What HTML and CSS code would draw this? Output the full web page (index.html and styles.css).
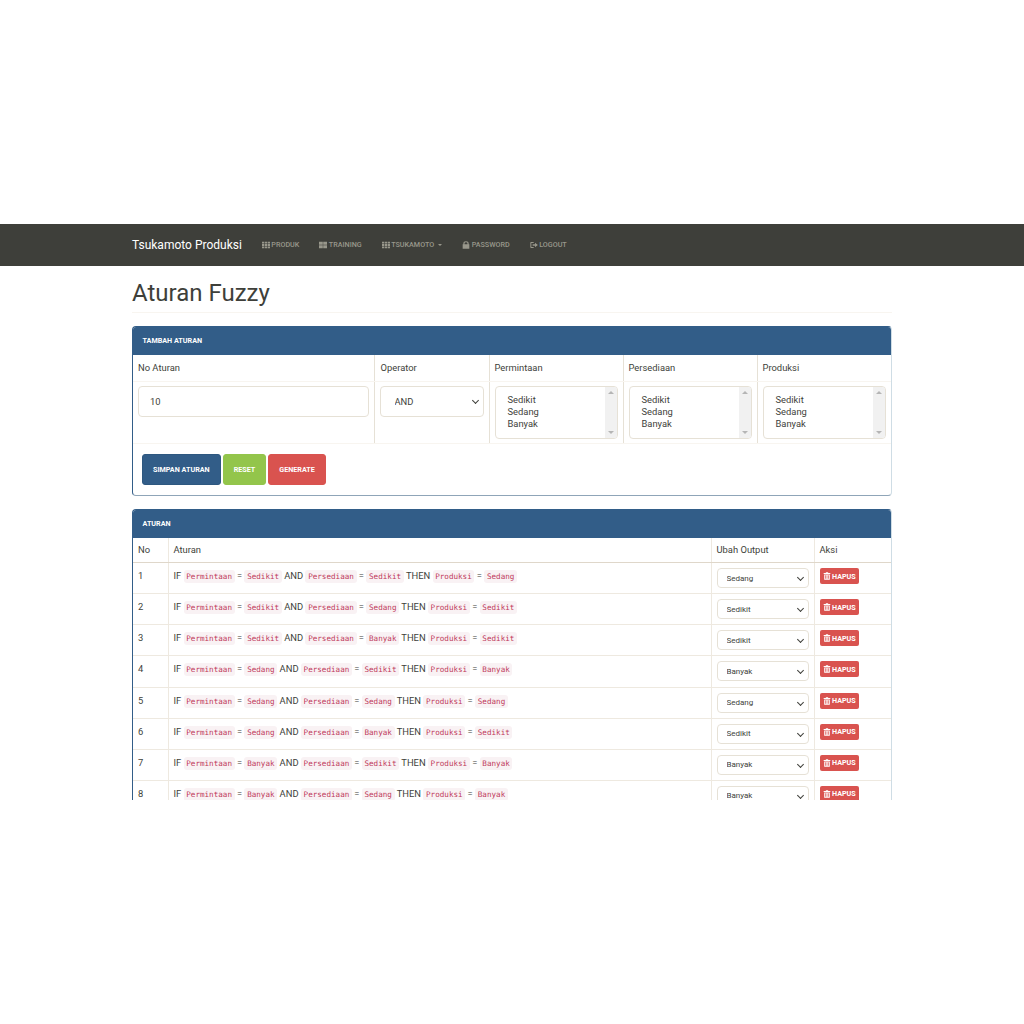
FILE: index.html
```html
<!DOCTYPE html>
<html lang="en">
<head>
<meta charset="UTF-8" />
<title>Aturan Fuzzy - Tsukamoto Produksi</title>
<link rel="stylesheet" href="styles.css">
</head>
<body>

<div class="page">
  <header class="navbar">
    <div class="container nav-inner">
      <a class="brand" href="#">Tsukamoto Produksi</a>
      <nav class="nav-links">
        <a href="#"><svg class="ico" viewBox="0 0 12 12"><path d="M0 1h3.400v2.800H0zM4.300 1h3.400v2.800H4.300zM8.600 1H12v2.800H8.600zM0 4.600h3.400v2.800H0zM4.300 4.600h3.400v2.800H4.300zM8.600 4.600H12v2.800H8.600zM0 8.200h3.400V11H0zM4.300 8.200h3.400V11H4.300zM8.600 8.200H12V11H8.600z"/></svg>Produk</a>
        <a href="#"><svg class="ico" viewBox="0 0 12 12"><path d="M0 1h5.700v4.700H0zM6.300 1H12v4.700H6.300zM0 6.300h5.700V11H0zM6.300 6.300H12V11H6.300z"/></svg>Training</a>
        <a href="#"><svg class="ico" viewBox="0 0 12 12"><path d="M0 1h3.400v2.800H0zM4.300 1h3.400v2.800H4.300zM8.600 1H12v2.800H8.600zM0 4.600h3.400v2.800H0zM4.300 4.600h3.400v2.800H4.300zM8.600 4.600H12v2.800H8.600zM0 8.200h3.400V11H0zM4.300 8.200h3.400V11H4.300zM8.600 8.200H12V11H8.600z"/></svg>Tsukamoto <span class="caret"></span></a>
        <a href="#"><svg class="ico" viewBox="0 0 12 12"><path d="M2 5V3.800a4 3.500 0 0 1 8 0V5h1v6.500H1V5zM3.800 5h4.400V3.800a2.200 2 0 0 0-4.400 0z" fill-rule="evenodd"/></svg>Password</a>
        <a href="#"><svg class="ico" viewBox="0 0 12 12"><path d="M5.500 1.500H1.500q-1 0-1 1v7q0 1 1 1h4V9H2V3h3.500zM7.500 2.800 11.800 6 7.500 9.200V7.200H4V4.800h3.500z"/></svg>Logout</a>
      </nav>
    </div>
  </header>

  <main class="container">
    <h1 class="page-title">Aturan Fuzzy</h1>

    <section class="panel">
      <div class="panel-heading">Tambah Aturan</div>
      <table class="form-table">
        <thead>
          <tr>
            <th class="col-no">No Aturan</th>
            <th class="col-op">Operator</th>
            <th class="col-var">Permintaan</th>
            <th class="col-var">Persediaan</th>
            <th class="col-var">Produksi</th>
          </tr>
        </thead>
        <tbody>
          <tr>
            <td><input class="field" type="text" value="10"></td>
            <td><div class="select-wrap"><select class="field select-op"><option>AND</option></select></div></td>
            <td><div class="listbox"><div class="opts">Sedikit<br>Sedang<br>Banyak</div><div class="scroll"><i class="up"></i><i class="down"></i></div></div></td>
            <td><div class="listbox"><div class="opts">Sedikit<br>Sedang<br>Banyak</div><div class="scroll"><i class="up"></i><i class="down"></i></div></div></td>
            <td><div class="listbox"><div class="opts">Sedikit<br>Sedang<br>Banyak</div><div class="scroll"><i class="up"></i><i class="down"></i></div></div></td>
          </tr>
        </tbody>
      </table>
      <div class="form-actions">
        <button class="btn btn-primary">Simpan Aturan</button>
        <button class="btn btn-success">Reset</button>
        <button class="btn btn-danger">Generate</button>
      </div>
    </section>

    <section class="panel">
      <div class="panel-heading">Aturan</div>
      <table class="rules-table">
        <thead>
          <tr>
            <th class="col-num">No</th>
            <th>Aturan</th>
            <th class="col-out">Ubah Output</th>
            <th class="col-act">Aksi</th>
          </tr>
        </thead>
        <tbody id="rules"></tbody>
      </table>
    </section>
  </main>
</div>

<script>
  // Rule rows: permintaan, persediaan, produksi
  const rules = [
    ['Sedikit', 'Sedikit', 'Sedang'],
    ['Sedikit', 'Sedang', 'Sedikit'],
    ['Sedikit', 'Banyak', 'Sedikit'],
    ['Sedang', 'Sedikit', 'Banyak'],
    ['Sedang', 'Sedang', 'Sedang'],
    ['Sedang', 'Banyak', 'Sedikit'],
    ['Banyak', 'Sedikit', 'Banyak'],
    ['Banyak', 'Sedang', 'Banyak']
  ];
  const tbody = document.getElementById('rules');
  rules.forEach((r, i) => {
    const tr = document.createElement('tr');
    tr.innerHTML = `
      <td>${i + 1}</td>
      <td class="rule">IF <code>Permintaan</code> = <code>${r[0]}</code> AND <code>Persediaan</code> = <code>${r[1]}</code> THEN <code>Produksi</code> = <code>${r[2]}</code></td>
      <td><div class="select-wrap"><select class="field select-out"><option>${r[2]}</option></select></div></td>
      <td><button class="btn-hapus"><svg class="ico-trash" viewBox="0 0 12 12"><path d="M4.500.5h3L8 1.500h3V3H1V1.500h3zM1.800 3.800h8.400V11.500H1.800zM3.500 5v5.300h1V5zM5.500 5v5.300h1V5zM7.500 5v5.300h1V5z" fill-rule="evenodd"/></svg>Hapus</button></td>
    `;
    tbody.appendChild(tr);
  });
</script>

</body>
</html>
```

FILE: styles.css
```css
* { box-sizing: border-box; }
body { margin: 0; background: white; color: #3e3f3a; font-family: Roboto, "Liberation Sans", sans-serif; font-size: 9.4px; }
.page { margin-top: 224px; height: 576px; overflow: hidden; }
.container { width: 760px; margin: 0 auto; }

.navbar { background: #3e3f3a; height: 42px; }
.nav-inner { display: flex; align-items: center; height: 41px; }
.brand { color: white; font-size: 12px; text-decoration: none; margin-right: 10px; }
.nav-links { display: flex; }
.nav-links a { display: flex; align-items: center; padding: 0 10px; color: #98978b; font-size: 7.2px; font-weight: 500; text-transform: uppercase; text-decoration: none; }
.ico { width: 8px; height: 8px; margin-right: 1.500px; fill: #98978b; }
.caret { display: inline-block; width: 0; height: 0; margin-left: 4px; border-left: 2.500px solid transparent; border-right: 2.500px solid transparent; border-top: 2.500px solid #98978b; }

.page-title { margin: 0; padding: 13px 0 5px; height: 47px; font-size: 24px; font-weight: 400; line-height: 29px; border-bottom: 1px solid #f8f5f0; }

.panel { margin-top: 13px; border: 1px solid #325d88; border-right-color: #cfdde5; border-bottom-color: #8fa5b8; border-radius: 4px; background: white; overflow: hidden; }
.panel-heading { height: 29px; margin: -1px -1px 0; padding-left: 10.500px; background: #325d88; color: white; font-size: 7.2px; font-weight: 700; line-height: 29px; text-transform: uppercase; }

table { width: 100%; border-collapse: collapse; table-layout: fixed; }
th { font-weight: 400; text-align: left; }

.form-table th { height: 26px; padding: 0 5px; border-bottom: 1px solid #f8f5f0; border-left: 1px solid #e6e1d6; }
.form-table td { height: 62px; padding: 4px 5px; border-left: 1px solid #e6e1d6; border-bottom: 1px solid #f8f5f0; vertical-align: top; }
.form-table th:first-child, .form-table td:first-child { border-left: 0; }
.form-table .col-op { padding-left: 6px; }
.col-no { width: 241px; }
.col-op { width: 115px; }
.col-var { width: 134px; }

.field { display: block; width: 100%; border: 1px solid #e6e1d6; border-radius: 4px; background: white; color: #3e3f3a; font-family: Roboto, "Liberation Sans", sans-serif; font-size: 9.4px; }
input.field { height: 31px; padding: 0 11px; }
.select-wrap { position: relative; }
.select-wrap::after { content: ""; position: absolute; top: 50%; right: 6px; width: 4px; height: 4px; margin-top: -3px; border-right: 1px solid #3e3f3a; border-bottom: 1px solid #3e3f3a; transform: rotate(45deg); pointer-events: none; }
.field.select-op, .field.select-out { appearance: none; -webkit-appearance: none; }
.select-op { height: 31px; padding: 0 14px; }
.field.select-out { height: 20px; padding: 0 9px; font-size: 8px; }

.listbox { display: flex; height: 53px; border: 1px solid #e6e1d6; border-radius: 4px; overflow: hidden; }
.opts { flex: 1; padding: 7px 12px; line-height: 12px; }
.scroll { position: relative; width: 12px; background: #f1f1f1; }
.scroll i { position: absolute; left: 3px; width: 0; height: 0; border-left: 3px solid transparent; border-right: 3px solid transparent; }
.scroll .up { top: 4px; border-bottom: 3px solid #b5b5b5; }
.scroll .down { bottom: 4px; border-top: 3px solid #b5b5b5; }

.form-actions { display: flex; gap: 2px; height: 51px; padding: 10px 9px; }
.btn { height: 31px; padding: 0 10px; border: 1px solid transparent; border-radius: 3px; color: white; font-family: Roboto, "Liberation Sans", sans-serif; font-size: 7.2px; font-weight: 700; text-transform: uppercase; }
.btn-primary { background: #325d88; border-color: #2e5880; }
.btn-success { background: #93c54b; border-color: #93c54b; }
.btn-danger { background: #d9534f; border-color: #d9534f; }

.rules-table th { height: 25px; padding: 0 5px; border-bottom: 1px solid #dfd7ca; border-left: 1px solid #eee9e0; }
.rules-table td { height: 31.150px; padding: 5px; border-top: 1px solid #eee9e0; border-left: 1px solid #eee9e0; vertical-align: top; line-height: 15px; }
.rules-table th:first-child, .rules-table td:first-child { border-left: 0; }
.col-num { width: 35px; }
.col-out { width: 103px; }
.col-act { width: 77px; }
.rule { white-space: nowrap; }
code { padding: 2px 2.700px; border-radius: 3px; background: #f9f2f4; color: #c0395b; font-family: "DejaVu Sans Mono", "Liberation Mono", monospace; font-size: 7.600px; }

.btn-hapus { display: flex; align-items: center; height: 16px; padding: 0 3.500px; border: 0; border-radius: 2px; background: #d9534f; color: white; font-family: Roboto, "Liberation Sans", sans-serif; font-size: 7.2px; font-weight: 700; text-transform: uppercase; }
.ico-trash { width: 8px; height: 8px; margin-right: 1px; fill: white; }
```
